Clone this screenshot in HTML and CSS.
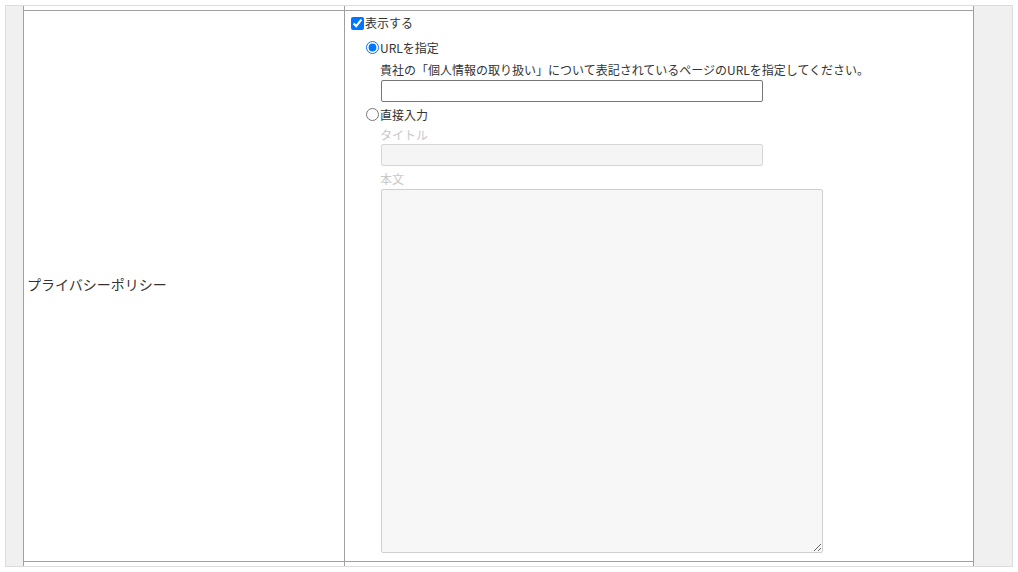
FILE: index.html
```html
<!DOCTYPE html>
<html lang="ja">
<head>
<meta charset="utf-8">
<title>プライバシーポリシー設定</title>
<link rel="stylesheet" href="styles.css">
</head>
<body>
<div class="frame">
  <div class="sheet">
    <div class="cell cell-label stub-top"></div>
    <div class="cell cell-field stub-top"></div>

    <div class="cell cell-label row-main">
      <span class="label-text">プライバシーポリシー</span>
    </div>
    <div class="cell cell-field row-main">
      <label class="line-check">
        <input type="checkbox" class="chk" checked>
        <span>表示する</span>
      </label>
      <div class="options">
        <label class="radio-line first">
          <input type="radio" name="mode" class="rad" checked>
          <span>URLを指定</span>
        </label>
        <div class="opt-body">
          <div class="desc">貴社の「個人情報の取り扱い」について表記されているページのURLを指定してください。</div>
          <input type="text" class="text-input">
        </div>
        <label class="radio-line">
          <input type="radio" name="mode" class="rad">
          <span>直接入力</span>
        </label>
        <div class="opt-body">
          <div class="sub-label">タイトル</div>
          <input type="text" class="text-input is-disabled" disabled>
          <div class="sub-label body-label">本文</div>
          <textarea class="text-area is-disabled" disabled></textarea>
        </div>
      </div>
    </div>

    <div class="cell cell-label stub-bottom"></div>
    <div class="cell cell-field stub-bottom"></div>
  </div>
</div>
</body>
</html>
```

FILE: styles.css
```css
html, body {
  margin: 0;
  padding: 0;
  background: #ffffff;
}

body {
  font-family: "Noto Sans CJK JP", "Noto Sans", sans-serif;
  color: #333333;
}

.frame {
  margin: 5px 0 0 5px;
  width: 1008px;
  height: 562px;
  box-sizing: border-box;
  border: 1px solid #dcdcdc;
  background: #eff0ef;
  padding: 0 38px 0 17px;
  overflow: hidden;
}

.sheet {
  display: grid;
  grid-template-columns: 321px 629px;
  grid-template-rows: 5px 551px 4px;
  width: 951px;
  height: 100%;
  box-sizing: border-box;
  background: #ffffff;
  border-left: 1px solid #a0a0a0;
}

.cell {
  box-sizing: border-box;
  border-right: 1px solid #a0a0a0;
}

.stub-top,
.row-main {
  border-bottom: 1px solid #a0a0a0;
}

.cell-label.row-main {
  display: flex;
  align-items: center;
  padding: 0 0 5px 3px;
  font-size: 14px;
  color: #333333;
}

.cell-field.row-main {
  padding: 0 0 0 6px;
  font-size: 12px;
  color: #333333;
}

.line-check,
.radio-line {
  display: flex;
  align-items: center;
  width: max-content;
}

.line-check {
  height: 22px;
}

.radio-line {
  height: 22px;
  margin: 1px 0;
}

.radio-line.first {
  margin: 3px 0 2px;
}

.chk,
.rad {
  width: 13px;
  height: 13px;
  margin: 0 1px 0 0;
}

.chk {
  margin-top: 3px;
}

.options {
  padding-left: 15px;
}

.opt-body {
  padding-left: 14px;
}

.desc {
  height: 20px;
  line-height: 20px;
  white-space: nowrap;
}

.text-input {
  display: block;
  box-sizing: border-box;
  width: 382px;
  height: 22px;
  margin: 0 0 0 1px;
  padding: 1px 4px;
  border: 1px solid #767676;
  border-radius: 2px;
  background: #ffffff;
  font: inherit;
}

.sub-label {
  height: 18px;
  line-height: 18px;
  color: #c8c8c8;
}

.sub-label.body-label {
  height: 20px;
  line-height: 20px;
  margin-top: 3px;
}

.text-input.is-disabled {
  background: #f5f5f5;
  border-color: #d6d6d6;
}

.text-area {
  display: block;
  box-sizing: border-box;
  width: 442px;
  height: 364px;
  margin: 0 0 0 1px;
  padding: 2px;
  border: 1px solid #cfcfcf;
  border-radius: 2px;
  background: #f7f7f7;
  font: inherit;
  resize: both;
}
```
